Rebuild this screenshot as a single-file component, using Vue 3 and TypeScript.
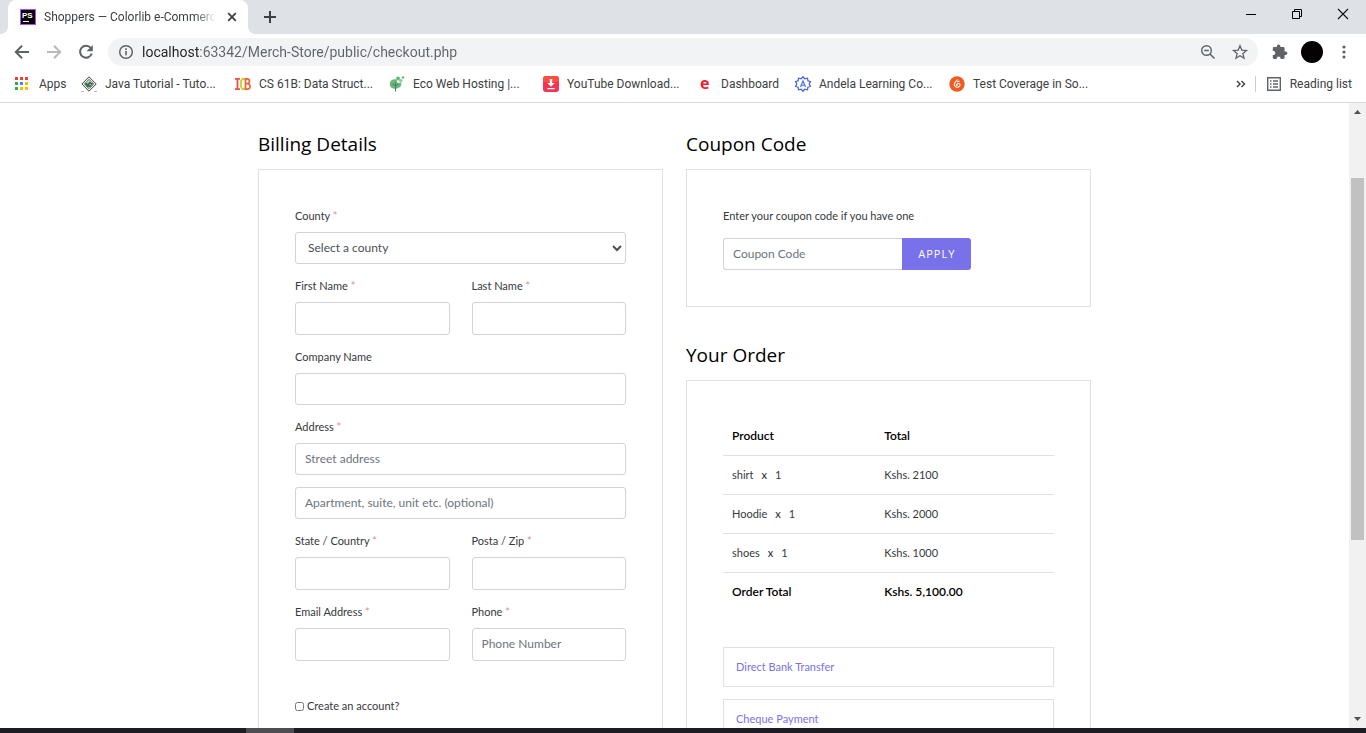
<script setup lang="ts">
import { ref } from 'vue'

interface Bookmark { icon: string; label: string; size: string }
interface Field { id: string; label: string; placeholder?: string }
interface OrderItem { name: string; quantity: number; total: string }

const bookmarks: Bookmark[] = [
  { icon: 'apps', label: 'Apps', size: 'short' },
  { icon: 'java', label: 'Java Tutorial - Tuto...', size: 'long' },
  { icon: 'cs', label: 'CS 61B: Data Struct...', size: 'long' },
  { icon: 'eco', label: 'Eco Web Hosting |...', size: 'long' },
  { icon: 'download', label: 'YouTube Download...', size: 'long' },
  { icon: 'e', label: 'Dashboard', size: 'medium' },
  { icon: 'andela', label: 'Andela Learning Co...', size: 'long' },
  { icon: 'test', label: 'Test Coverage in So...', size: 'long' },
]
const appColors = ['#ea4335', '#ea4335', '#ea4335', '#34a853', '#4285f4', '#fbbc05', '#34a853', '#fbbc05', '#fbbc05']

const names: Field[] = [
  { id: 'first-name', label: 'First Name' },
  { id: 'last-name', label: 'Last Name' },
]
const region: Field[] = [
  { id: 'state', label: 'State / Country' },
  { id: 'zip', label: 'Posta / Zip' },
]
const contact: Field[] = [
  { id: 'email', label: 'Email Address' },
  { id: 'phone', label: 'Phone', placeholder: 'Phone Number' },
]
const items: OrderItem[] = [
  { name: 'shirt', quantity: 1, total: 'Kshs. 2100' },
  { name: 'Hoodie', quantity: 1, total: 'Kshs. 2000' },
  { name: 'shoes', quantity: 1, total: 'Kshs. 1000' },
]
const payments = ['Direct Bank Transfer', 'Cheque Payment']
const address = ref('localhost:63342/Merch-Store/public/checkout.php')
const createAccount = ref(false)
</script>

<template>
  <div class="window">
    <header class="chrome">
      <div class="tabs">
        <div class="tab">
          <svg viewBox="0 0 16 16" width="16" height="16" aria-hidden="true">
            <rect width="16" height="16" fill="#b24cf5" /><rect x="1" y="1" width="14" height="14" fill="#050505" />
            <text x="2" y="9" class="ps">PS</text><path d="M3 12.5h6" stroke="#fff" />
          </svg>
          <span class="tab-title">Shoppers — Colorlib e-Commerc</span>
          <button class="icon-button close-tab" aria-label="Close tab">
            <svg viewBox="0 0 16 16" width="16" height="16"><path d="M4.2 4.2l7.6 7.6M11.8 4.2l-7.6 7.6" stroke="#3c4043" stroke-width="1.8" /></svg>
          </button>
        </div>
        <button class="icon-button new-tab" aria-label="New tab">
          <svg viewBox="0 0 16 16" width="16" height="16"><path d="M8 2v12M2 8h12" stroke="#3c4043" stroke-width="2" /></svg>
        </button>
        <div class="window-controls">
          <button class="icon-button" aria-label="Minimize"><svg viewBox="0 0 12 12" width="12" height="12"><path d="M1 6.5h10" stroke="#000" /></svg></button>
          <button class="icon-button" aria-label="Restore"><svg viewBox="0 0 12 12" width="12" height="12"><path d="M1.5 3.5h7v7h-7zM3.5 3V1.5h7v7H9" fill="none" stroke="#000" /></svg></button>
          <button class="icon-button" aria-label="Close"><svg viewBox="0 0 12 12" width="12" height="12"><path d="M1 1l10 10M11 1L1 11" stroke="#111" stroke-width="1.1" /></svg></button>
        </div>
      </div>

      <div class="toolbar">
        <button class="icon-button" aria-label="Back"><svg viewBox="0 0 16 16" width="16" height="16"><path d="M15 8H2M8 1.8L1.8 8 8 14.2" fill="none" stroke="#5f6368" stroke-width="2" /></svg></button>
        <button class="icon-button" aria-label="Forward"><svg viewBox="0 0 16 16" width="16" height="16"><path d="M1 8h13M8 1.8L14.2 8 8 14.2" fill="none" stroke="#b8babd" stroke-width="2" /></svg></button>
        <button class="icon-button" aria-label="Reload"><svg viewBox="0 0 16 16" width="16" height="16"><path d="M12.8 4A6 6 0 1 0 13.8 9.5" fill="none" stroke="#5f6368" stroke-width="2" /><path d="M14.8 1v6.2H8.6z" fill="#5f6368" /></svg></button>
        <div class="omnibox">
          <svg viewBox="0 0 16 16" width="16" height="16" aria-hidden="true"><circle cx="8" cy="8" r="6.3" fill="none" stroke="#5f6368" stroke-width="1.5" /><path d="M8 7v4.2M8 4.3v1.6" stroke="#5f6368" stroke-width="1.6" /></svg>
          <input v-model="address" class="address" type="text" aria-label="Address">
          <button class="icon-button" aria-label="Zoom"><svg viewBox="0 0 16 16" width="16" height="16"><circle cx="6.5" cy="6.5" r="4.8" fill="none" stroke="#5f6368" stroke-width="1.4" /><path d="M4.2 6.5h4.6M10 10l4.5 4.5" stroke="#5f6368" stroke-width="1.5" /></svg></button>
          <button class="icon-button" aria-label="Bookmark this page"><svg viewBox="0 0 16 16" width="16" height="16"><path d="M8 1.8l1.8 4.3 4.7.4-3.6 3.1 1.1 4.6L8 11.8l-4 2.4 1.1-4.6-3.6-3.1 4.7-.4z" fill="none" stroke="#5f6368" stroke-width="1.3" /></svg></button>
        </div>
        <button class="icon-button" aria-label="Extensions"><svg viewBox="0 0 16 16" width="16" height="16"><path d="M13.6 7.4h-1V4.5c0-.8-.6-1.4-1.4-1.4H8.4V2.2a1.8 1.8 0 0 0-3.6 0v.9H2.1C1.3 3.1.8 3.7.8 4.5v2.6h1a2 2 0 0 1 0 3.9h-1v2.6c0 .8.6 1.4 1.4 1.4h2.5v-1a2 2 0 0 1 3.9 0v1h2.6c.8 0 1.4-.6 1.4-1.4V11h1a1.8 1.8 0 0 0 0-3.6z" fill="#5f6368" /></svg></button>
        <button class="avatar" aria-label="Profile"></button>
        <button class="icon-button" aria-label="Menu"><svg viewBox="0 0 16 16" width="16" height="16" fill="#5f6368"><circle cx="8" cy="3" r="1.6" /><circle cx="8" cy="8" r="1.6" /><circle cx="8" cy="13" r="1.6" /></svg></button>
      </div>

      <nav class="bookmarks" aria-label="Bookmarks">
        <a v-for="b in bookmarks" :key="b.label" href="#" class="bookmark" :class="b.size">
          <svg viewBox="0 0 16 16" width="16" height="16" aria-hidden="true">
            <template v-if="b.icon === 'apps'">
              <rect v-for="(c, i) in appColors" :key="i" :x="(i % 3) * 5" :y="Math.floor(i / 3) * 5 + 1" width="3" height="3" :fill="c" />
            </template>
            <template v-else-if="b.icon === 'java'">
              <path d="M8 .8L15.2 8 8 15.2.8 8z" fill="#eee" stroke="#444" /><path d="M8 3.3L12.7 8 8 12.7 3.3 8z" fill="#bcd0c1" stroke="#555" stroke-width=".8" /><path d="M4.5 8.8c1-3 2.5 2 3.5-1s2 2 3.5-.5M5.5 10h5" fill="none" stroke="#24633c" stroke-width="1.4" /><path d="M0 15.5h3M13 15.5h3" stroke="#bbb" />
            </template>
            <template v-else-if="b.icon === 'cs'">
              <path d="M0 2.8h5M2.5 3v10M0 13.2h5" fill="none" stroke="#ef4c4c" stroke-width="1.8" /><path d="M9.5 4C8 1.5 5.8 3 5.8 8s2 6.5 3.7 4" fill="none" stroke="#c3d72f" stroke-width="2" /><path d="M10.5 3v10M9.5 2.8h2.7c3 0 3 4.7 0 4.7H11c5.5 0 5 5.7 1.5 5.7h-3" fill="none" stroke="#ee6332" stroke-width="1.7" />
            </template>
            <template v-else-if="b.icon === 'eco'">
              <path d="M7.5 3.5c-4-.8-7 1.5-6.8 5 .3 3.5 4 5 7.3 4 3.5-1 5-3 4-6L8.5 7z" fill="#67b77f" /><circle cx="9" cy="2.5" r="2" fill="#67b77f" /><circle cx="11.8" cy="4.8" r="1.8" fill="#8bcf9d" /><circle cx="14" cy="1.5" r="1.3" fill="#67b77f" /><path d="M6.5 6.5v9M3.5 8l3 2 3-2" fill="none" stroke="#4c7d5d" />
            </template>
            <template v-else-if="b.icon === 'download'">
              <rect width="16" height="16" rx="3" fill="#f53252" /><path d="M0 6V3a3 3 0 0 1 3-3h10a3 3 0 0 1 3 3v3z" fill="#fb5040" /><path d="M6.8 3h2.4v4h2.5L8 10.7 4.3 7h2.5zM4.3 12h7.4v1.3H4.3z" fill="#fff" />
            </template>
            <template v-else-if="b.icon === 'e'">
              <text x="3" y="13" class="letter-e">e</text>
            </template>
            <template v-else-if="b.icon === 'andela'">
              <path d="M8 .8l1.8 2L12.5 2.2l.4 2.6 2.5.8L14.2 8l1.2 2.4-2.5.8-.4 2.6-2.7-.6L8 15.2l-1.8-2-2.7.6-.4-2.6-2.5-.8L1.8 8 .6 5.6l2.5-.8.4-2.6 2.7.6z" fill="#fff" stroke="#4867df" stroke-width="1.3" /><path d="M5.5 11L8 5l2.5 6M6.5 9.2h3" fill="none" stroke="#4867df" stroke-width="1.1" />
            </template>
            <template v-else>
              <circle cx="8" cy="8" r="7.7" fill="#f15b22" /><path d="M8.5 3.5L6 6.5c-2 3 1 5.5 3.5 4.5s1.8-4-.3-3.5S7 10 8.5 9.5M8 6l2.5-1" fill="none" stroke="#fff" stroke-width="1.1" />
            </template>
          </svg>
          <span>{{ b.label }}</span>
        </a>
        <div class="bookmark-end">
          <button class="icon-button" aria-label="More bookmarks"><svg viewBox="0 0 12 12" width="12" height="12"><path d="M2 3l3 3-3 3M6.5 3l3 3-3 3" fill="none" stroke="#45494d" stroke-width="1.5" /></svg></button>
          <button class="reading"><svg viewBox="0 0 16 16" width="16" height="16" aria-hidden="true"><path d="M1.7 1.7h12.6v12.6H1.7z" fill="none" stroke="#5f6368" stroke-width="1.4" /><path d="M4 5h1.5M4 8h1.5M4 11h1.5M7 5h5M7 8h5M7 11h5" stroke="#5f6368" stroke-width="1.5" /></svg>Reading list</button>
        </div>
      </nav>
    </header>

    <div class="viewport">
      <main class="page">
        <div class="columns">
          <section>
            <h2>Billing Details</h2>
            <form class="box billing" @submit.prevent>
              <div class="group">
                <label for="county">County <i>*</i></label>
                <select id="county" class="control"><option>Select a county</option></select>
              </div>
              <div class="pair">
                <div v-for="f in names" :key="f.id" class="group">
                  <label :for="f.id">{{ f.label }} <i>*</i></label>
                  <input :id="f.id" class="control" type="text">
                </div>
              </div>
              <div class="group">
                <label for="company">Company Name</label>
                <input id="company" class="control" type="text">
              </div>
              <div class="group">
                <label for="street">Address <i>*</i></label>
                <input id="street" class="control" type="text" placeholder="Street address">
              </div>
              <input class="control" type="text" aria-label="Apartment" placeholder="Apartment, suite, unit etc. (optional)">
              <div class="pair">
                <div v-for="f in region" :key="f.id" class="group">
                  <label :for="f.id">{{ f.label }} <i>*</i></label>
                  <input :id="f.id" class="control" type="text">
                </div>
              </div>
              <div class="pair">
                <div v-for="f in contact" :key="f.id" class="group">
                  <label :for="f.id">{{ f.label }} <i>*</i></label>
                  <input :id="f.id" class="control" type="text" :placeholder="f.placeholder">
                </div>
              </div>
              <label class="account" for="account"><input id="account" v-model="createAccount" type="checkbox">Create an account?</label>
            </form>
          </section>

          <div class="side">
            <section>
              <h2>Coupon Code</h2>
              <form class="box" @submit.prevent>
                <label class="coupon-label" for="coupon">Enter your coupon code if you have one</label>
                <div class="coupon">
                  <input id="coupon" class="control" type="text" placeholder="Coupon Code">
                  <button class="apply" type="submit">APPLY</button>
                </div>
              </form>
            </section>
            <section>
              <h2>Your Order</h2>
              <div class="box">
                <table>
                  <thead><tr><th>Product</th><th>Total</th></tr></thead>
                  <tbody>
                    <tr v-for="item in items" :key="item.name">
                      <td>{{ item.name }}<b>x</b>{{ item.quantity }}</td>
                      <td>{{ item.total }}</td>
                    </tr>
                  </tbody>
                  <tfoot><tr><th>Order Total</th><th>Kshs. 5,100.00</th></tr></tfoot>
                </table>
                <div class="payments">
                  <div v-for="p in payments" :key="p" class="payment"><a href="#">{{ p }}</a></div>
                </div>
              </div>
            </section>
          </div>
        </div>
      </main>
      <div class="scrollbar" aria-hidden="true">
        <svg viewBox="0 0 17 17" width="17" height="17"><path d="M5 11h7L8.5 7z" fill="#505050" /></svg>
        <div class="track"><div class="thumb"></div></div>
        <svg viewBox="0 0 17 17" width="17" height="17"><path d="M5 6h7L8.5 10z" fill="#505050" /></svg>
      </div>
    </div>
    <footer class="taskbar"><span></span></footer>
  </div>
</template>

<style>
body { margin: 0; }
</style>

<style scoped>
* { box-sizing: border-box; }
.window { height: 100vh; display: flex; flex-direction: column; overflow: hidden; background: #fff; font-family: Lato, "Open Sans", sans-serif; }
button { border: 0; padding: 0; background: none; font: inherit; color: inherit; }
a { text-decoration: none; color: inherit; }
svg { display: block; flex: none; overflow: visible; }
.icon-button { display: flex; align-items: center; justify-content: center; flex: none; }
.chrome { flex: none; border-bottom: 1px solid #d9dadc; font-family: Roboto, "Noto Sans", sans-serif; font-size: 12px; color: #3c4043; }

.tabs { height: 34px; display: flex; align-items: center; padding-left: 8px; background: #dee1e6; }
.tab { position: relative; width: 240px; height: 34px; display: flex; align-items: center; gap: 8px; padding: 0 8px 0 12px; border-radius: 8px 8px 0 0; background: #fff; }
.tab::before, .tab::after { content: ""; position: absolute; bottom: 0; width: 8px; height: 8px; }
.tab::before { left: -8px; background: radial-gradient(circle at 0 0, #dee1e6 8px, #fff 8px); }
.tab::after { right: -8px; background: radial-gradient(circle at 100% 0, #dee1e6 8px, #fff 8px); }
.tab-title { flex: 1; min-width: 0; white-space: nowrap; mask-image: linear-gradient(90deg, #000 88%, transparent); }
.close-tab { width: 16px; }
.new-tab { width: 44px; }
.ps { font: bold 8px "Liberation Sans", sans-serif; fill: #fff; }
.window-controls { display: flex; margin-left: auto; height: 28px; align-self: flex-start; }
.window-controls .icon-button { width: 46px; }

.toolbar { height: 34px; display: flex; align-items: center; gap: 16px; padding: 2px 14px 0; }
.omnibox { flex: 1; height: 28px; display: flex; align-items: center; gap: 16px; padding: 0 10px; margin: 0 -2px; border-radius: 14px; background: #f1f3f4; }
.address { flex: 1; min-width: 0; border: 0; padding: 0; margin-left: -8px; outline: 0; font: 14px Roboto, "Noto Sans", sans-serif; color: transparent; background: linear-gradient(90deg, #202124 58px, #5f6368 58px); background-clip: text; }
.avatar { width: 22px; height: 22px; border-radius: 50%; background: #050203; margin: 0 -3px; }

.bookmarks { height: 34px; display: flex; align-items: center; padding: 0 14px 2px 15px; }
.bookmark { display: flex; align-items: center; gap: 8px; white-space: nowrap; }
.short { width: 66px; }
.medium { width: 98px; }
.long { width: 154px; }
.bookmark-end { display: flex; align-items: center; gap: 8px; margin-left: auto; }
.reading { display: flex; align-items: center; gap: 8px; border-left: 1px solid #c8cacc; padding-left: 10px; white-space: nowrap; }
.letter-e { font: bold 16px "Open Sans", sans-serif; fill: #ed1c2e; }

.viewport { flex: 1; min-height: 0; display: flex; }
.page { flex: 1; min-width: 0; overflow: hidden; padding: 28px 24px 0; font-size: 11px; line-height: 20px; color: #35393d; }
.columns { max-width: 833px; margin: 0 auto; display: grid; grid-template-columns: 1fr 1fr; gap: 23px; }
h2 { margin: 0 0 12px; font-family: "Open Sans", sans-serif; font-size: 19px; line-height: 26px; font-weight: 400; color: #000; }
.box { border: 1px solid #dee2e6; padding: 36px; }
.side { display: flex; flex-direction: column; gap: 35px; }
.billing { display: flex; flex-direction: column; gap: 12px; padding-bottom: 80px; }
.group { display: flex; flex-direction: column; gap: 6px; min-width: 0; }
.pair { display: grid; grid-template-columns: 1fr 1fr; gap: 22px; }
.pair .control { height: 33px; }
i { font-style: normal; color: #e98b8b; }
.control { width: 100%; min-width: 0; height: 32px; border: 1px solid #ced4da; border-radius: 3px; padding: 0 9px 2px; background: #fff; font: inherit; font-size: 12px; color: #495057; }
select.control { padding: 0 4px 2px 8px; }
.control::placeholder { color: #6c757d; opacity: 1; }
.account { display: flex; align-items: center; gap: 3px; margin-top: 23px; }
.account input { width: 9px; height: 9px; margin: 0; }

.coupon-label { display: block; margin-bottom: 12px; }
.coupon { display: flex; width: 75%; }
.coupon .control { flex: 1; border-right: 0; border-radius: 3px 0 0 3px; }
.apply { width: 69px; border-radius: 0 3px 3px 0; background: #7971ea; color: #fff; font-family: "Open Sans", sans-serif; font-size: 11px; letter-spacing: 1px; }

table { width: 100%; border-collapse: collapse; table-layout: fixed; }
th, td { height: 39px; padding: 0 9px; text-align: left; border-bottom: 1px solid #dee2e6; }
thead th { height: 38px; }
th:first-child, td:first-child { width: 46%; }
th { font-size: 12px; font-weight: 600; color: #000; }
tfoot th { border-bottom: 0; }
td b { margin: 0 8px; font-weight: 400; color: #212529; }
.payments { display: flex; flex-direction: column; gap: 12px; margin-top: 36px; }
.payment { border: 1px solid #dee2e6; padding: 9px 12px; color: #7971ea; }

.scrollbar { width: 17px; flex: none; display: flex; flex-direction: column; background: #f1f1f1; }
.track { flex: 1; min-height: 0; padding: 58px 2px 0; }
.thumb { height: 68%; background: #c1c1c1; }
.taskbar { height: 5px; flex: none; display: flex; background: #1d1c22; }
.taskbar span { width: 48px; margin-left: 18%; background: #4e4d52; }
</style>
